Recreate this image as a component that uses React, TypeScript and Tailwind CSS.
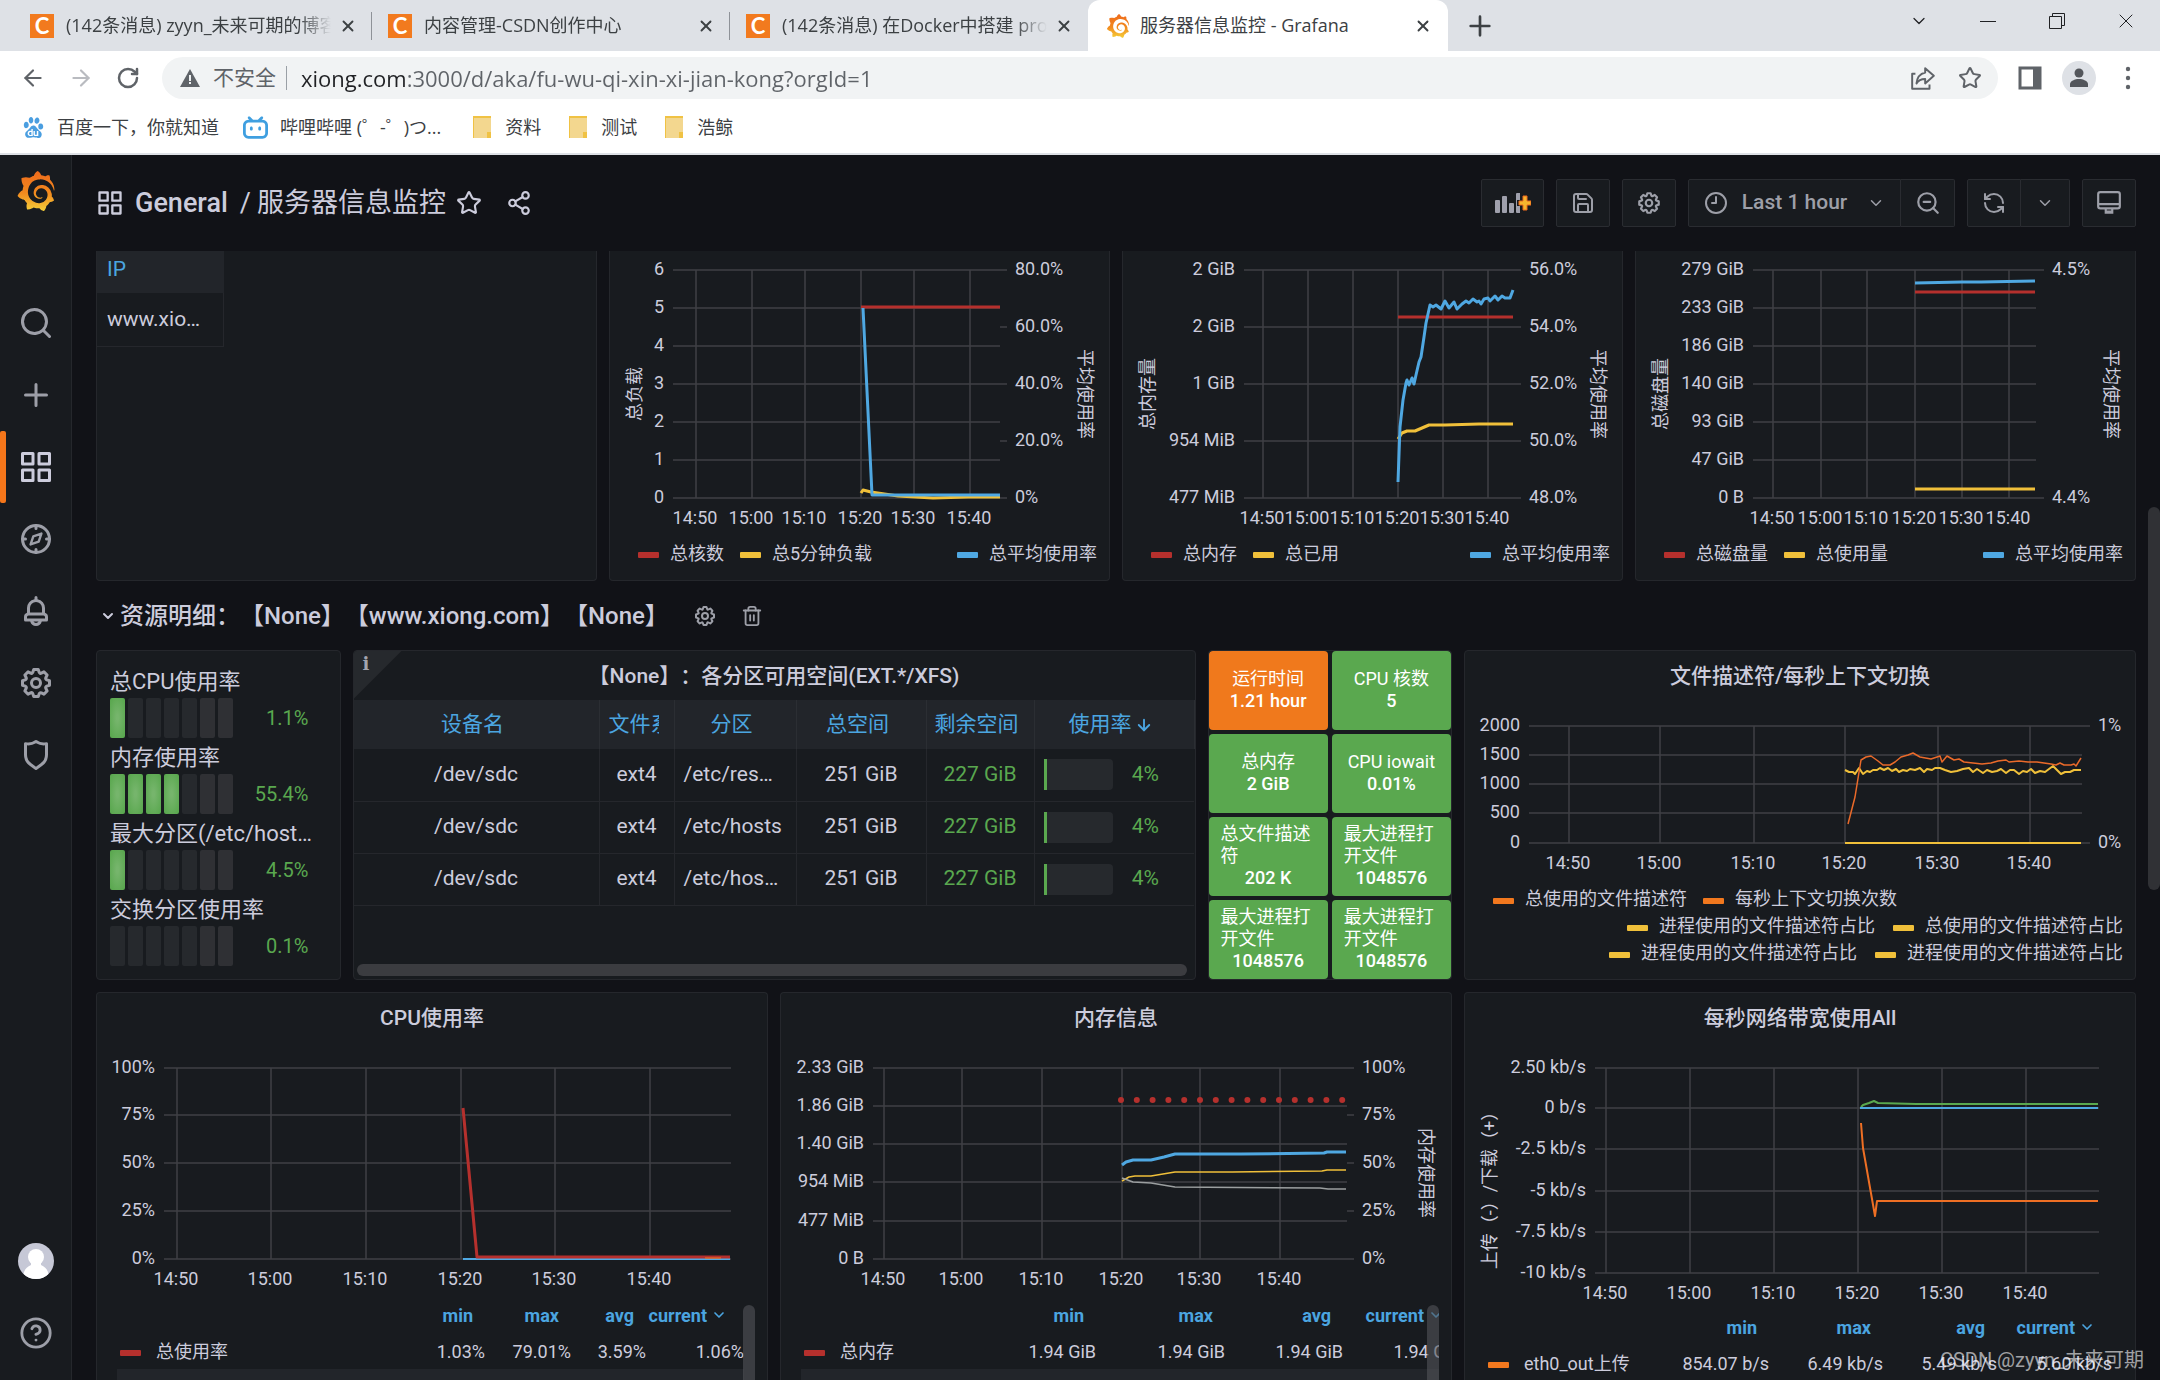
import type { ReactNode } from "react";
import {
  ArrowDown,
  ArrowLeft,
  ArrowRight,
  ChevronDown,
  CircleHelp,
  Clock9,
  RefreshCcw,
  RotateCw,
  Save,
  Share2,
  Star,
  Trash2,
  X,
  ZoomOut,
} from "lucide-react";
import { SiBaidu, SiBilibili, SiGrafana } from "react-icons/si";

const RED = "#b5302d";
const BLUE = "#4fa8e2";
const YELLOW = "#f0c03a";
const ORANGE = "#f2781e";
const GREEN = "#5aa84f";

/* ---------- icons ---------- */

const paths = {
  search:
    "M21.71,20.29,18,16.61A9,9,0,1,0,16.61,18l3.68,3.68a1,1,0,0,0,1.42,0A1,1,0,0,0,21.71,20.29ZM11,18a7,7,0,1,1,7-7A7,7,0,0,1,11,18Z",
  plus: "M19,11H13V5a1,1,0,0,0-2,0v6H5a1,1,0,0,0,0,2h6v6a1,1,0,0,0,2,0V13h6a1,1,0,0,0,0-2Z",
  apps: "M10,13H3a1,1,0,0,0-1,1v7a1,1,0,0,0,1,1h7a1,1,0,0,0,1-1V14A1,1,0,0,0,10,13ZM9,20H4V15H9ZM21,2H14a1,1,0,0,0-1,1v7a1,1,0,0,0,1,1h7a1,1,0,0,0,1-1V3A1,1,0,0,0,21,2ZM20,9H15V4h5Zm1,4H14a1,1,0,0,0-1,1v7a1,1,0,0,0,1,1h7a1,1,0,0,0,1-1V14A1,1,0,0,0,21,13Zm-1,7H15V15h5ZM10,2H3A1,1,0,0,0,2,3v7a1,1,0,0,0,1,1h7a1,1,0,0,0,1-1V3A1,1,0,0,0,10,2ZM9,9H4V4H9Z",
  bell: "M18,13.18V10a6,6,0,0,0-5-5.91V3a1,1,0,0,0-2,0V4.09A6,6,0,0,0,6,10v3.18A3,3,0,0,0,4,16v2a1,1,0,0,0,1,1H8.14a4,4,0,0,0,7.72,0H19a1,1,0,0,0,1-1V16A3,3,0,0,0,18,13.18ZM8,10a4,4,0,0,1,8,0v3H8Zm4,10a2,2,0,0,1-1.72-1h3.44A2,2,0,0,1,12,20Zm6-3H6V16a1,1,0,0,1,1-1H17a1,1,0,0,1,1,1Z",
  cog: "M21.32,9.55l-1.89-.63.89-1.78A1,1,0,0,0,20.13,6L18,3.87a1,1,0,0,0-1.15-.19l-1.78.89-.63-1.89A1,1,0,0,0,13.5,2h-3a1,1,0,0,0-.95.68L8.92,4.57,7.14,3.68A1,1,0,0,0,6,3.87L3.87,6a1,1,0,0,0-.19,1.15l.89,1.78-1.89.63A1,1,0,0,0,2,10.5v3a1,1,0,0,0,.68.95l1.89.63-.89,1.78A1,1,0,0,0,3.87,18L6,20.13a1,1,0,0,0,1.15.19l1.78-.89.63,1.89a1,1,0,0,0,.95.68h3a1,1,0,0,0,.95-.68l.63-1.89,1.78.89A1,1,0,0,0,18,20.13L20.13,18a1,1,0,0,0,.19-1.15l-.89-1.78,1.89-.63A1,1,0,0,0,22,13.5v-3A1,1,0,0,0,21.32,9.55ZM20,12.78l-1.2.4A2,2,0,0,0,17.64,16l.57,1.14-1.1,1.1L16,17.64a2,2,0,0,0-2.79,1.16l-.4,1.2H11.22l-.4-1.2A2,2,0,0,0,8,17.64l-1.14.57-1.1-1.1L6.36,16A2,2,0,0,0,5.2,13.18L4,12.78V11.22l1.2-.4A2,2,0,0,0,6.36,8L5.79,6.89l1.1-1.1L8,6.36A2,2,0,0,0,10.82,5.2l.4-1.2h1.56l.4,1.2A2,2,0,0,0,16,6.36l1.14-.57,1.1,1.1L17.64,8a2,2,0,0,0,1.16,2.79l1.2.4ZM12,8a4,4,0,1,0,4,4A4,4,0,0,0,12,8Zm0,6a2,2,0,1,1,2-2A2,2,0,0,1,12,14Z",
  shield:
    "M19.63,3.65a1,1,0,0,0-.84-.2,8,8,0,0,1-6.22-1.27,1,1,0,0,0-1.14,0A8,8,0,0,1,5.21,3.45a1,1,0,0,0-.84.2A1,1,0,0,0,4,4.43v7.45a9,9,0,0,0,3.77,7.33l3.65,2.6a1,1,0,0,0,1.16,0l3.65-2.6A9,9,0,0,0,20,11.88V4.43A1,1,0,0,0,19.63,3.65ZM18,11.88a7,7,0,0,1-2.93,5.7L12,19.77,8.93,17.58A7,7,0,0,1,6,11.88V5.58a10,10,0,0,0,6-1.39,10,10,0,0,0,6,1.39Z",
};

const Icon = ({ name, className }: { name: keyof typeof paths; className: string }) => (
  <svg viewBox="0 0 24 24" fill="currentColor" className={className} aria-hidden="true">
    <path d={paths[name]} />
  </svg>
);

const CompassIcon = () => (
  <svg viewBox="0 0 24 24" fill="none" stroke="currentColor" strokeWidth="2" strokeLinejoin="round" className="size-9">
    <circle cx="12" cy="12" r="9" />
    <path d="M12 3v2M12 19v2M3 12h2M19 12h2" strokeLinecap="round" />
    <path d="M15.6 8.4l-1.8 5.4-5.4 1.8 1.8-5.4z" strokeWidth="1.6" />
  </svg>
);

const AddPanelIcon = () => (
  <svg viewBox="0 0 36 24" className="h-6 w-9" aria-hidden="true">
    <g fill="#9fa0ac">
      <rect x="0" y="9" width="5" height="13" rx="1" />
      <rect x="7" y="5" width="5" height="17" rx="1" />
      <rect x="14" y="12" width="5" height="10" rx="1" />
      <path d="M21 3q0-1 1-1h3v7h-3v6h3v7h-3q-1 0-1-1z" />
    </g>
    <path d="M28 5h4v5h4v4h-4v5h-4v-5h-4v-4h4z" fill="#f6b52e" stroke="#ee6a1c" />
  </svg>
);

const TvIcon = () => (
  <svg viewBox="0 0 24 24" fill="none" stroke="currentColor" strokeWidth="2" className="size-[26px]" aria-hidden="true">
    <rect x="2" y="2" width="20" height="15" rx="2" />
    <path d="M2 13h20M9 17v3h6v-3M8 21h8" />
  </svg>
);

const GrafanaGradient = () => (
  <svg width="0" height="0" className="absolute" aria-hidden="true">
    <linearGradient id="grafana" x1="0" y1="1" x2="0" y2="0">
      <stop offset="0" stopColor="#f5cf3a" />
      <stop offset="0.45" stopColor="#f28a1e" />
      <stop offset="1" stopColor="#ee6a1c" />
    </linearGradient>
  </svg>
);

/* ---------- browser ---------- */

const CsdnIcon = () => (
  <span className="flex size-6 shrink-0 items-center justify-center bg-[#f27a1e] font-['Lato',sans-serif] text-[22px] leading-6 font-bold text-white">
    C
  </span>
);

const BrowserTab = ({ title, divider }: { title: string; divider?: boolean }) => (
  <div className="flex w-[358px] items-center">
    <div className="flex min-w-0 flex-1 items-center pr-[14px] pl-4">
      <CsdnIcon />
      <button className="ml-3 flex-1 overflow-hidden text-left whitespace-nowrap [mask-image:linear-gradient(to_right,#000_88%,transparent)]">
        {title}
      </button>
      <button aria-label="关闭标签页" className="ml-2">
        <X className="size-[18px]" strokeWidth={2.5} />
      </button>
    </div>
    <span className={divider ? "h-7 w-px bg-[#8e9298]" : "h-7 w-px"} />
  </div>
);

const TabStrip = () => (
  <div className="flex h-[51px] items-stretch bg-[#dee1e6] pl-[14px] text-[18px] text-[#3c4043]">
    <BrowserTab title="(142条消息) zyyn_未来可期的博客" divider />
    <BrowserTab title="内容管理-CSDN创作中心" divider />
    <BrowserTab title="(142条消息) 在Docker中搭建 prometheus" />
    <div className="flex w-[360px] items-center rounded-t-xl bg-white pr-4 pl-[18px]">
      <SiGrafana fill="url(#grafana)" className="size-6 shrink-0" />
      <button className="ml-[10px] flex-1 text-left">服务器信息监控 - Grafana</button>
      <button aria-label="关闭标签页">
        <X className="size-[18px]" strokeWidth={2.5} />
      </button>
    </div>
    <button aria-label="新标签页" className="ml-4">
      <Icon name="plus" className="size-8" />
    </button>
    <div className="ml-auto flex h-[42px] items-center text-[#202124]">
      <button aria-label="搜索标签页" className="flex w-[69px] justify-center">
        <ChevronDown className="size-5" strokeWidth={1.5} />
      </button>
      <button aria-label="最小化" className="flex w-[69px] justify-center">
        <span className="h-px w-4 bg-[#202124]" />
      </button>
      <button aria-label="还原" className="flex w-[69px] justify-center">
        <svg viewBox="0 0 16 16" fill="none" stroke="currentColor" className="size-4">
          <path d="M.5 3.5h12v12H.5zM3.5 3V.5h12v12H13" />
        </svg>
      </button>
      <button aria-label="关闭" className="flex w-[69px] justify-center">
        <X className="size-6" strokeWidth={1} />
      </button>
    </div>
  </div>
);

const AddressBar = () => (
  <div className="flex h-[54px] items-center bg-white px-5 text-[#5f6368]">
    <button aria-label="后退">
      <ArrowLeft className="size-[26px]" strokeWidth={2} />
    </button>
    <button aria-label="前进" className="ml-[22px] text-[#b9bbc0]">
      <ArrowRight className="size-[26px]" strokeWidth={2} />
    </button>
    <button aria-label="重新加载" className="ml-[22px]">
      <RotateCw className="size-6" strokeWidth={2.5} />
    </button>
    <label className="ml-[22px] flex h-[42px] min-w-0 flex-1 items-center rounded-full bg-[#f1f3f4] pr-4 pl-[18px] text-[22px]">
      <svg viewBox="0 0 20 18" className="h-[18px] w-5 shrink-0" aria-hidden="true">
        <path d="M10 0l10 18H0z" fill="#5f6368" />
        <path d="M9 6h2v6H9zM9 13h2v2H9z" fill="#f1f3f4" />
      </svg>
      <span className="ml-[13px] text-[21px] whitespace-nowrap">不安全</span>
      <span className="ml-[10px] h-6 w-px shrink-0 bg-[#9aa0a6]" />
      <input
        type="text"
        defaultValue="xiong.com:3000/d/aka/fu-wu-qi-xin-xi-jian-kong?orgId=1"
        className="ml-[14px] min-w-0 flex-1 bg-[linear-gradient(to_right,#202124_106px,#5f6368_106px)] bg-clip-text text-transparent outline-none"
      />
      <button aria-label="分享">
        <svg viewBox="0 0 24 24" fill="none" stroke="currentColor" strokeWidth="1.8" strokeLinejoin="round" className="size-[26px]">
          <path d="M5 8H2v14h16v-4" />
          <path d="M14 3l8 7-8 7v-4c-4 0-6.500 1.500-8 4 .5-5 3-9 8-10z" />
        </svg>
      </button>
      <button aria-label="收藏" className="ml-[22px]">
        <Star className="size-6" strokeWidth={2} />
      </button>
    </label>
    <button aria-label="侧边栏" className="ml-5">
      <svg viewBox="0 0 24 24" className="size-6" fill="none" stroke="currentColor" strokeWidth="3">
        <rect x="2" y="2" width="20" height="20" />
        <path d="M15 2h7v20h-7z" fill="currentColor" stroke="none" />
      </svg>
    </button>
    <button aria-label="用户" className="ml-5 flex size-[34px] items-center justify-center rounded-full bg-[#dee1e6]">
      <svg viewBox="0 0 20 20" className="size-5" fill="#53565b">
        <circle cx="10" cy="5" r="4.500" />
        <path d="M1 19v-3c0-3 5-5 9-5s9 2 9 5v3z" />
      </svg>
    </button>
    <button aria-label="菜单" className="ml-5">
      <svg viewBox="0 0 24 24" className="size-6" fill="currentColor">
        <circle cx="12" cy="3" r="2.200" />
        <circle cx="12" cy="12" r="2.200" />
        <circle cx="12" cy="21" r="2.200" />
      </svg>
    </button>
  </div>
);

const Folder = ({ name }: { name: string }) => (
  <a href="#" className="flex items-center gap-[14px]">
    <svg viewBox="0 0 18 22" className="h-[22px] w-[18px]" aria-hidden="true">
      <path d="M0 0h18v22H0z" fill="#f3d78f" />
      <path d="M0 22V1h18" fill="none" stroke="#f0c244" strokeWidth="2" />
      <path d="M14 22v-6h4v6z" fill="#f0c244" />
    </svg>
    {name}
  </a>
);

const Bookmarks = () => (
  <nav className="flex h-[50px] items-center gap-7 border-b-2 border-[#dee1e6] bg-white pb-1 pl-[23px] text-[18px] text-[#3c4043]">
    <a href="#" className="-mr-1 flex items-center gap-[13px]">
      <SiBaidu className="size-[21px] text-[#4a9ee0]" />
      百度一下，你就知道
    </a>
    <a href="#" className="mr-1 flex items-center gap-3">
      <SiBilibili className="size-[25px] text-[#3f9fe0]" />
      哔哩哔哩 (゜-゜)つ...
    </a>
    <Folder name="资料" />
    <Folder name="测试" />
    <Folder name="浩鲸" />
  </nav>
);

/* ---------- grafana shell ---------- */

const SideItem = ({ label, active, children }: { label: string; active?: boolean; children: ReactNode }) => (
  <a
    href="#"
    aria-label={label}
    className={
      active
        ? "relative flex h-[72px] items-center justify-center text-[#ccccdc]"
        : "flex h-[72px] items-center justify-center text-[#9d9fa8]"
    }
  >
    {active && <span className="absolute top-0 left-0 h-full w-[6px] rounded-xs bg-[#f5761a]" />}
    {children}
  </a>
);

const Sidebar = () => (
  <aside className="flex w-[72px] shrink-0 flex-col border-r border-[#25272c] bg-[#181b1f] pb-[11px]">
    <a href="#" aria-label="Home" className="mb-[60px] flex h-[72px] items-center justify-center">
      <SiGrafana fill="url(#grafana)" className="size-10" />
    </a>
    <SideItem label="Search">
      <Icon name="search" className="size-9" />
    </SideItem>
    <SideItem label="Create">
      <Icon name="plus" className="size-9" />
    </SideItem>
    <SideItem label="Dashboards" active>
      <Icon name="apps" className="size-9" />
    </SideItem>
    <SideItem label="Explore">
      <CompassIcon />
    </SideItem>
    <SideItem label="Alerting">
      <Icon name="bell" className="size-9" />
    </SideItem>
    <SideItem label="Configuration">
      <Icon name="cog" className="size-9" />
    </SideItem>
    <SideItem label="Server Admin">
      <Icon name="shield" className="size-9" />
    </SideItem>
    <div className="mt-auto">
      <SideItem label="Profile">
        <svg viewBox="0 0 36 36" className="size-9">
          <clipPath id="avatar">
            <circle cx="18" cy="18" r="18" />
          </clipPath>
          <g clipPath="url(#avatar)">
            <path d="M0 0h36v36H0z" fill="#c6c8d6" />
            <ellipse cx="18" cy="14" rx="8" ry="8" fill="#fff" />
            <path d="M13 18h10v4c5 2 8 6 8 14H5c0-8 3-12 8-14z" fill="#fff" />
          </g>
        </svg>
      </SideItem>
      <SideItem label="Help">
        <CircleHelp className="size-[34px]" strokeWidth={2} />
      </SideItem>
    </div>
  </aside>
);

const toolButton = "flex h-12 items-center justify-center border border-[#2a2c31] bg-[#181b1f]";

const TopBar = () => (
  <header className="flex h-24 shrink-0 items-center px-6 text-[#ccccdc]">
    <Icon name="apps" className="size-7" />
    <h1 className="ml-[11px] flex items-center text-[27px] whitespace-nowrap">
      <a href="#" className="font-medium">
        General
      </a>
      <span className="ml-3">/</span>
      <a href="#" className="ml-[6px]">
        服务器信息监控
      </a>
    </h1>
    <button aria-label="Mark as favorite" className="ml-[10px]">
      <Star className="size-[26px]" strokeWidth={2} />
    </button>
    <button aria-label="Share dashboard" className="ml-6">
      <Share2 className="size-[26px]" strokeWidth={2} />
    </button>
    <div className="ml-auto flex gap-3 text-[#9d9fa8]">
      <button aria-label="Add panel" className={`${toolButton} w-[63px] rounded-xs`}>
        <AddPanelIcon />
      </button>
      <button aria-label="Save dashboard" className={`${toolButton} w-[54px] rounded-xs`}>
        <Save className="size-6" strokeWidth={2} />
      </button>
      <button aria-label="Dashboard settings" className={`${toolButton} w-[54px] rounded-xs`}>
        <Icon name="cog" className="size-[26px]" />
      </button>
      <div className="flex">
        <button className={`${toolButton} w-[213px] rounded-l-xs text-[21px] font-medium`}>
          <Clock9 className="size-6" strokeWidth={2} />
          <span className="ml-[14px]">Last 1 hour</span>
          <ChevronDown className="ml-5 size-[18px]" strokeWidth={2} />
        </button>
        <button aria-label="Zoom out" className={`${toolButton} w-[54px] rounded-r-xs border-l-0`}>
          <ZoomOut className="size-[26px]" strokeWidth={2} />
        </button>
      </div>
      <div className="flex">
        <button aria-label="Refresh" className={`${toolButton} w-[54px] rounded-l-xs`}>
          <RefreshCcw className="size-6" strokeWidth={2} />
        </button>
        <button aria-label="Refresh interval" className={`${toolButton} w-[49px] rounded-r-xs border-l-0`}>
          <ChevronDown className="size-[18px]" strokeWidth={2} />
        </button>
      </div>
      <button aria-label="Cycle view mode" className={`${toolButton} w-[54px] rounded-xs`}>
        <TvIcon />
      </button>
    </div>
  </header>
);

/* ---------- charts ---------- */

type Series = { color: string; points: string; width?: number };
type Tick = [number, string];

interface ChartProps {
  width: number;
  height: number;
  left: number;
  right: number;
  times: number[];
  yLeft: Tick[];
  yRight?: Tick[];
  rightLabelX?: number;
  leftTitle?: string;
  rightTitle?: string;
  titleY?: number;
  rightTitleX?: number;
  series: Series[];
  children?: ReactNode;
}

const timeLabels = ["14:50", "15:00", "15:10", "15:20", "15:30", "15:40"];

const Chart = (props: ChartProps) => {
  const { width, height, left, right, times, yLeft, yRight = [], rightLabelX = 0, titleY = 143 } = props;
  const top = yLeft[0][0];
  const bottom = yLeft[yLeft.length - 1][0];

  return (
    <svg viewBox={`0 0 ${width} ${height}`} className="block w-full" fill="#ccccdc" fontSize="18">
      <g stroke="#3f4146" strokeWidth="1.500">
        {yLeft.map(([y]) => (
          <line key={y} x1={left} x2={right} y1={y} y2={y} />
        ))}
        {times.map((x) => (
          <line key={x} x1={x} x2={x} y1={top} y2={bottom} />
        ))}
        {yRight.map(([y]) => (
          <line key={y} x1={right} x2={rightLabelX - 8} y1={y} y2={y} />
        ))}
      </g>
      {yLeft.map(([y, label]) => (
        <text key={y} x={left - 9} y={y + 5} textAnchor="end">
          {label}
        </text>
      ))}
      {yRight.map(([y, label]) => (
        <text key={y} x={rightLabelX} y={y + 5}>
          {label}
        </text>
      ))}
      {times.map((x, i) => (
        <text key={x} x={x - 1} y={bottom + 26} textAnchor="middle">
          {timeLabels[i]}
        </text>
      ))}
      {props.leftTitle && (
        <text transform={`translate(31 ${titleY}) rotate(-90)`} textAnchor="middle">
          {props.leftTitle}
        </text>
      )}
      {props.rightTitle && (
        <text transform={`translate(${props.rightTitleX} ${titleY}) rotate(90)`} textAnchor="middle">
          {props.rightTitle}
        </text>
      )}
      {props.series.map((s, i) => (
        <polyline key={i} points={s.points} fill="none" stroke={s.color} strokeWidth={s.width ?? 3} strokeLinejoin="round" />
      ))}
      {props.children}
    </svg>
  );
};

const LegendItem = ({ color, label }: { color: string; label: string }) => (
  <button className="flex items-center gap-[11px] whitespace-nowrap">
    <span className="mt-1 h-[6px] w-[21px] rounded-[1px]" style={{ background: color }} />
    {label}
  </button>
);

const Legend = ({ left, right }: { left: [string, string][]; right: string }) => (
  <div className="flex h-9 items-center gap-4 pr-3 pl-7 text-[18px]">
    {left.map(([color, label]) => (
      <LegendItem key={label} color={color} label={label} />
    ))}
    <div className="ml-auto">
      <LegendItem color={BLUE} label={right} />
    </div>
  </div>
);

const panel = "min-w-0 overflow-hidden border border-[#25272c] bg-[#181b1f]";

const PanelTitle = ({ children }: { children: ReactNode }) => (
  <h2 className="flex h-[49px] items-center justify-center pt-[2px] text-[21px] font-medium">{children}</h2>
);

/* ---------- first row, partly scrolled away ---------- */

const OverviewRow = () => (
  <div className="grid grid-cols-[repeat(24,minmax(0,1fr))] gap-3">
    <section className={`${panel} col-span-6 h-[330px] rounded-b-sm border-t-0`}>
      <table className="w-[127px] table-fixed text-left text-[21px]">
        <thead>
          <tr className="h-[42px] bg-[#22252a]">
            <th className="px-[10px] pb-1 font-normal text-[#4ba5e0]">IP</th>
          </tr>
        </thead>
        <tbody>
          <tr className="h-[53px]">
            <td className="border-r border-b border-[#25272c] px-[10px] whitespace-nowrap">www.xio…</td>
          </tr>
        </tbody>
      </table>
    </section>

    <section className={`${panel} col-span-6 h-[330px] rounded-b-sm border-t-0`}>
      <Chart
        width={499}
        height={284}
        left={63}
        right={390}
        times={[86, 142, 195, 251, 304, 360]}
        yLeft={[[19, "6"], [57, "5"], [95, "4"], [133, "3"], [171, "2"], [209, "1"], [247, "0"]]}
        yRight={[[19, "80.0%"], [76, "60.0%"], [133, "40.0%"], [190, "20.0%"], [247, "0%"]]}
        rightLabelX={405}
        rightTitleX={469}
        leftTitle="总负载"
        rightTitle="平均使用率"
        series={[
          { color: RED, points: "251,56 390,56" },
          { color: YELLOW, points: "251,242 253,239 261,241 288,245 323,247 358,246 390,246" },
          { color: BLUE, points: "253,57 262,244 390,244" },
        ]}
      />
      <Legend left={[[RED, "总核数"], [YELLOW, "总5分钟负载"]]} right="总平均使用率" />
    </section>

    <section className={`${panel} col-span-6 h-[330px] rounded-b-sm border-t-0`}>
      <Chart
        width={499}
        height={284}
        left={121}
        right={390}
        times={[140, 185, 230, 275, 320, 365]}
        yLeft={[[19, "2 GiB"], [76, "2 GiB"], [133, "1 GiB"], [190, "954 MiB"], [247, "477 MiB"]]}
        yRight={[[19, "56.0%"], [76, "54.0%"], [133, "52.0%"], [190, "50.0%"], [247, "48.0%"]]}
        rightLabelX={406}
        rightTitleX={469}
        leftTitle="总内存量"
        rightTitle="平均使用率"
        series={[
          { color: RED, points: "275,66 390,66" },
          { color: YELLOW, points: "275,188 279,182 284,180 292,180 299,177 306,174 322,174 356,173 390,173" },
          {
            color: BLUE,
            points:
              "275,231 277,176 280,149 283,132 284,129 286,134 289,127 291,133 293,124 296,111 298,106 301,86 303,72 307,54 310,56 313,54 318,58 322,50 326,57 331,51 334,58 339,53 343,50 346,52 350,48 354,51 356,50 358,53 361,48 365,47 367,50 372,45 375,49 379,45 382,47 387,47 390,39",
          },
        ]}
      />
      <Legend left={[[RED, "总内存"], [YELLOW, "总已用"]]} right="总平均使用率" />
    </section>

    <section className={`${panel} col-span-6 h-[330px] rounded-b-sm border-t-0`}>
      <Chart
        width={499}
        height={284}
        left={117}
        right={400}
        times={[137, 185, 231, 279, 326, 373]}
        yLeft={[
          [19, "279 GiB"],
          [57, "233 GiB"],
          [95, "186 GiB"],
          [133, "140 GiB"],
          [171, "93 GiB"],
          [209, "47 GiB"],
          [247, "0 B"],
        ]}
        yRight={[[19, "4.5%"], [247, "4.4%"]]}
        rightLabelX={416}
        rightTitleX={469}
        leftTitle="总磁盘量"
        rightTitle="平均使用率"
        series={[
          { color: RED, points: "279,41 399,41" },
          { color: YELLOW, points: "279,238 399,238" },
          { color: BLUE, points: "279,32 326,31 345,31 399,30" },
        ]}
      />
      <Legend left={[[RED, "总磁盘量"], [YELLOW, "总使用量"]]} right="总平均使用率" />
    </section>
  </div>
);

/* ---------- second row ---------- */

const gauges = [
  { label: "总CPU使用率", value: "1.1%", lit: 1 },
  { label: "内存使用率", value: "55.4%", lit: 4 },
  { label: "最大分区(/etc/host…", value: "4.5%", lit: 1 },
  { label: "交换分区使用率", value: "0.1%", lit: 0 },
];

const cellClass = (index: number, lit: number) => {
  if (index < lit) return "h-10 w-[15px] rounded-xs bg-[radial-gradient(#76b56c_10%,#56a64b)]";
  if (index > 4) return "h-10 w-[15px] rounded-xs bg-[#2f3034]";
  return "h-10 w-[15px] rounded-xs bg-[#26292d]";
};

const UsageGauges = () => (
  <section className={`${panel} col-span-3 flex h-[330px] flex-col gap-[3px] rounded-sm px-[13px] pt-[14px]`}>
    {gauges.map((gauge) => (
      <div key={gauge.label}>
        <h3 className="text-[22px] leading-[33px] whitespace-nowrap">{gauge.label}</h3>
        <div className="flex items-center gap-[3px]">
          {[0, 1, 2, 3, 4, 5, 6].map((i) => (
            <span key={i} className={cellClass(i, gauge.lit)} />
          ))}
          <span className="ml-auto pr-[18px] text-[20px] text-[#5aa84f]">{gauge.value}</span>
        </div>
      </div>
    ))}
  </section>
);

const partitions = [
  { device: "/dev/sdc", type: "ext4", mount: "/etc/res…" },
  { device: "/dev/sdc", type: "ext4", mount: "/etc/hosts" },
  { device: "/dev/sdc", type: "ext4", mount: "/etc/hos…" },
];

const cell = "border-r border-b border-[#25272c] px-[9px] whitespace-nowrap";

const PartitionTable = () => (
  <section className={`${panel} relative col-span-10 h-[330px] rounded-sm`}>
    <div className="absolute top-0 left-0 size-12 bg-[#26292d] pt-[2px] pl-[9px] [clip-path:polygon(0_0,100%_0,0_100%)]">
      <span className="font-['DejaVu_Serif',serif] text-[18px] leading-5 font-bold text-[#a4a5af]">i</span>
    </div>
    <PanelTitle>【None】：各分区可用空间(EXT.*/XFS)</PanelTitle>
    <table className="w-full table-fixed text-center text-[21px]">
      <colgroup>
        <col />
        <col className="w-[75px]" />
        <col className="w-[122px]" />
        <col className="w-[130px]" />
        <col className="w-[108px]" />
        <col className="w-[160px]" />
      </colgroup>
      <thead>
        <tr className="h-[49px] bg-[#22252a] text-[#4ba5e0] [&>th]:border-r [&>th]:border-[#2b2e33] [&>th]:pr-[7px] [&>th]:font-normal">
          <th>设备名</th>
          <th className="pl-[9px]">
            <div className="w-[50px] overflow-hidden text-left whitespace-nowrap">文件系统</div>
          </th>
          <th>分区</th>
          <th>总空间</th>
          <th>剩余空间</th>
          <th>
            <button className="inline-flex items-center gap-[3px]">
              使用率
              <ArrowDown className="size-[18px]" strokeWidth={2.5} />
            </button>
          </th>
        </tr>
      </thead>
      <tbody>
        {partitions.map((p) => (
          <tr key={p.mount} className="h-[52px]">
            <td className={cell}>{p.device}</td>
            <td className={cell}>{p.type}</td>
            <td className={`${cell} text-left`}>{p.mount}</td>
            <td className={cell}>251 GiB</td>
            <td className={`${cell} text-[#5aa84f]`}>227 GiB</td>
            <td className="border-b border-[#25272c] px-[9px]">
              <div className="flex items-center">
                <span className="h-[31px] w-[69px] rounded-r-sm border-l-3 border-[#5aa84f] bg-[#26292d]" />
                <span className="ml-auto pr-[26px] text-[#5aa84f]">4%</span>
              </div>
            </td>
          </tr>
        ))}
      </tbody>
    </table>
    <div className="absolute right-2 bottom-[3px] left-[3px] h-3 rounded-full bg-[#3b3c40]" />
  </section>
);

const stats = [
  { label: "运行时间", value: "1.21 hour", warn: true },
  { label: "CPU 核数", value: "5" },
  { label: "总内存", value: "2 GiB" },
  { label: "CPU iowait", value: "0.01%" },
  { label: "总文件描述符", value: "202 K" },
  { label: "最大进程打开文件", value: "1048576" },
  { label: "最大进程打开文件", value: "1048576" },
  { label: "最大进程打开文件", value: "1048576" },
];

const StatTiles = () => (
  <section className={`${panel} col-span-3 grid h-[330px] grid-cols-2 grid-rows-4 gap-1 rounded-sm`}>
    {stats.map((stat, i) => (
      <div
        key={i}
        className={
          stat.warn
            ? "flex flex-col items-center justify-center rounded-sm bg-[#f0791c] px-3 pb-[2px] text-[18px] leading-[22px] text-white"
            : "flex flex-col items-center justify-center rounded-sm bg-[#5aa84f] px-3 pb-[2px] text-[18px] leading-[22px] text-white"
        }
      >
        <span>{stat.label}</span>
        <span className="font-medium">{stat.value}</span>
      </div>
    ))}
  </section>
);

const FileDescriptors = () => (
  <section className={`${panel} col-span-8 h-[330px] rounded-sm`}>
    <PanelTitle>文件描述符/每秒上下文切换</PanelTitle>
    <Chart
      width={670}
      height={185}
      left={64}
      right={617}
      times={[104, 195, 289, 380, 473, 565]}
      yLeft={[[26, "2000"], [55, "1500"], [84, "1000"], [113, "500"], [143, "0"]]}
      yRight={[[26, "1%"], [143, "0%"]]}
      rightLabelX={633}
      series={[
        { color: YELLOW, width: 2, points: "380,143 616,143" },
        {
          color: YELLOW,
          width: 2,
          points:
            "380,70 384,72 388,72 390,74 394,68 398,74 402,71 405,72 408,70 412,70 415,68 419,70 423,68 427,71 431,69 434,72 438,70 442,71 445,69 450,70 455,68 459,72 462,69 467,70 470,68 475,68 480,70 486,72 492,71 498,69 504,68 508,72 512,69 518,73 522,70 527,72 532,71 536,69 541,73 545,70 549,70 554,74 558,71 562,72 566,69 570,73 575,71 580,72 584,69 588,66 592,70 596,74 600,72 605,72 609,70 616,70",
        },
        {
          color: "#ea6a2a",
          width: 1.5,
          points:
            "383,124 390,97 396,60 401,57 406,56 413,61 418,65 425,65 430,62 436,57 443,55 448,53 455,57 466,59 475,56 477,62 482,56 489,60 494,59 499,62 508,63 517,64 526,63 533,61 541,60 544,62 554,61 563,62 572,62 586,64 591,65 595,63 599,65 606,65 609,64 611,66 616,58",
        },
      ]}
    />
    <div className="pr-3 pl-7 text-[18px] leading-[27px]">
      <div className="flex gap-4">
        <LegendItem color={ORANGE} label="总使用的文件描述符" />
        <LegendItem color={ORANGE} label="每秒上下文切换次数" />
      </div>
      <div className="flex justify-end gap-[18px]">
        <LegendItem color={YELLOW} label="进程使用的文件描述符占比" />
        <LegendItem color={YELLOW} label="总使用的文件描述符占比" />
      </div>
      <div className="flex justify-end gap-[18px]">
        <LegendItem color={YELLOW} label="进程使用的文件描述符占比" />
        <LegendItem color={YELLOW} label="进程使用的文件描述符占比" />
      </div>
    </div>
  </section>
);

/* ---------- third row ---------- */

interface LegendTableProps {
  color: string;
  label: string;
  values: string[];
  tableClass: string;
  columns: string[];
  scroll?: boolean;
}

const LegendTable = ({ color, label, values, tableClass, columns, scroll }: LegendTableProps) => (
  <div className="relative mr-3 ml-5 overflow-hidden text-[18px]">
    <table className={tableClass}>
      <colgroup>
        <col />
        {columns.map((width, i) => (
          <col key={i} className={width} />
        ))}
      </colgroup>
      <thead>
        <tr className="h-9 text-right text-[#4ba5e0] [&>th]:font-bold">
          <td />
          <th className="pr-3">min</th>
          <th className="pr-3">max</th>
          <th className="pr-3">avg</th>
          <th className="pr-[17px]">
            <button className="inline-flex items-center gap-1 whitespace-nowrap">
              current
              <ChevronDown className="size-4" strokeWidth={2.5} />
            </button>
          </th>
        </tr>
      </thead>
      <tbody>
        <tr className="h-9 text-right whitespace-nowrap">
          <td>
            <button className="ml-[3px] flex items-center gap-[15px]">
              <span className="mt-1 h-[6px] w-[21px] rounded-[1px]" style={{ background: color }} />
              {label}
            </button>
          </td>
          {values.map((value, i) => (
            <td key={i}>{value}</td>
          ))}
        </tr>
        <tr className="h-9 bg-[#22252a]">
          <td colSpan={5} />
        </tr>
      </tbody>
    </table>
    {scroll && <div className="absolute top-2 right-0 h-48 w-3 rounded-full bg-[#54555a]/60" />}
  </div>
);

const DetailRow = () => (
  <div className="grid min-h-0 flex-1 grid-cols-[repeat(24,minmax(0,1fr))] gap-3">
    <section className={`${panel} col-span-8 rounded-t-sm border-b-0`}>
      <PanelTitle>CPU使用率</PanelTitle>
      <Chart
        width={670}
        height={255}
        left={67}
        right={634}
        times={[80, 174, 269, 364, 458, 553]}
        yLeft={[[26, "100%"], [73, "75%"], [121, "50%"], [169, "25%"], [217, "0%"]]}
        series={[
          { color: BLUE, width: 2, points: "366,217 633,217" },
          { color: RED, points: "366,66 380,215 633,215" },
          { color: ORANGE, width: 1, points: "608,216 624,216" },
        ]}
      />
      <LegendTable
        color={RED}
        label="总使用率"
        values={["1.03%", "79.01%", "3.59%", "1.06%"]}
        columns={["w-[95px]", "w-[86px]", "w-[75px]", "w-[98px]"]}
        tableClass="w-[calc(100%-11px)] table-fixed"
        scroll
      />
    </section>

    <section className={`${panel} col-span-8 rounded-t-sm border-b-0`}>
      <PanelTitle>内存信息</PanelTitle>
      <Chart
        width={670}
        height={255}
        left={92}
        right={566}
        times={[103, 181, 261, 341, 419, 499]}
        yLeft={[
          [26, "2.33 GiB"],
          [64, "1.86 GiB"],
          [102, "1.40 GiB"],
          [140, "954 MiB"],
          [179, "477 MiB"],
          [217, "0 B"],
        ]}
        yRight={[[26, "100%"], [73, "75%"], [121, "50%"], [169, "25%"], [217, "0%"]]}
        rightLabelX={581}
        rightTitleX={639}
        rightTitle="内存使用率"
        titleY={131}
        series={[
          { color: BLUE, points: "341,123 345,120 352,118 370,118 383,115 394,112 460,112 543,111 546,110 565,110" },
          {
            color: YELLOW,
            width: 1.5,
            points: "341,139 348,135 354,134 370,134 394,130 451,130 541,129 546,128 565,128",
          },
          { color: "#9b9fa0", width: 1.5, points: "341,136 352,140 370,141 394,145 539,146 547,147 565,147" },
        ]}
      >
        {[...Array(15).keys()].map((i) => (
          <circle key={i} cx={340 + i * 15.8} cy={58} r={3} fill={RED} />
        ))}
      </Chart>
      <LegendTable
        color={RED}
        label="总内存"
        values={["1.94 GiB", "1.94 GiB", "1.94 GiB", "1.94 GiB"]}
        columns={["w-[120px]", "w-[129px]", "w-[118px]", "w-[118px]"]}
        tableClass="w-[calc(100%+22px)] table-fixed"
        scroll
      />
    </section>

    <section className={`${panel} col-span-8 rounded-t-sm border-b-0`}>
      <PanelTitle>每秒网络带宽使用All</PanelTitle>
      <Chart
        width={670}
        height={267}
        left={130}
        right={634}
        times={[141, 225, 309, 393, 477, 561]}
        yLeft={[
          [26, "2.50 kb/s"],
          [66, "0 b/s"],
          [107, "-2.5 kb/s"],
          [149, "-5 kb/s"],
          [190, "-7.5 kb/s"],
          [231, "-10 kb/s"],
        ]}
        leftTitle="上传（-）/下载（+）"
        titleY={144}
        series={[
          { color: GREEN, width: 2, points: "396,65 398,63 404,61 409,59 413,61 451,62 633,62" },
          { color: BLUE, width: 2, points: "395,66 633,66" },
          { color: "#ee6f24", width: 2, points: "396,81 398,106 410,174 412,159 447,159 633,159" },
        ]}
      />
      <LegendTable
        color={ORANGE}
        label="eth0_out上传"
        values={["854.07 b/s", "6.49 kb/s", "5.49 kb/s", "5.60 kb/s"]}
        columns={["w-[120px]", "w-[114px]", "w-[114px]", "w-[115px]"]}
        tableClass="w-[calc(100%-11px)] table-fixed"
      />
    </section>
  </div>
);

const App = () => {
  return (
    <div className="flex h-screen flex-col overflow-hidden font-['Roboto','Noto_Sans_CJK_SC',sans-serif] [text-spacing-trim:space-all]">
      <GrafanaGradient />
      <div className="shrink-0 font-['Open_Sans','Noto_Sans_CJK_SC',sans-serif]">
        <TabStrip />
        <AddressBar />
        <Bookmarks />
      </div>
      <div className="flex min-h-0 flex-1 bg-[#111217] text-[#ccccdc]">
        <Sidebar />
        <main className="relative flex min-w-0 flex-1 flex-col">
          <TopBar />
          <div className="flex min-h-0 flex-1 flex-col gap-3 px-6">
            <OverviewRow />
            <div className="flex h-[45px] shrink-0 items-center pl-1 text-[24px] font-medium whitespace-nowrap">
              <button className="flex items-center gap-1">
                <ChevronDown className="size-4" strokeWidth={3} />
                资源明细：【None】【www.xiong.com】【None】
              </button>
              <button aria-label="Row options" className="ml-6 text-[#9d9fa8]">
                <Icon name="cog" className="size-6" />
              </button>
              <button aria-label="Delete row" className="ml-6 text-[#9d9fa8]">
                <Trash2 className="size-[22px]" strokeWidth={2} />
              </button>
            </div>
            <div className="grid shrink-0 grid-cols-[repeat(24,minmax(0,1fr))] gap-3">
              <UsageGauges />
              <PartitionTable />
              <StatTiles />
              <FileDescriptors />
            </div>
            <DetailRow />
          </div>
          <div className="absolute top-[352px] right-0 h-[383px] w-3 rounded-full bg-[#303135]" />
          <p className="absolute right-4 bottom-[5px] text-[20px] leading-[30px] text-white/60">CSDN @zyyn_未来可期</p>
        </main>
      </div>
    </div>
  );
};

export default App;
